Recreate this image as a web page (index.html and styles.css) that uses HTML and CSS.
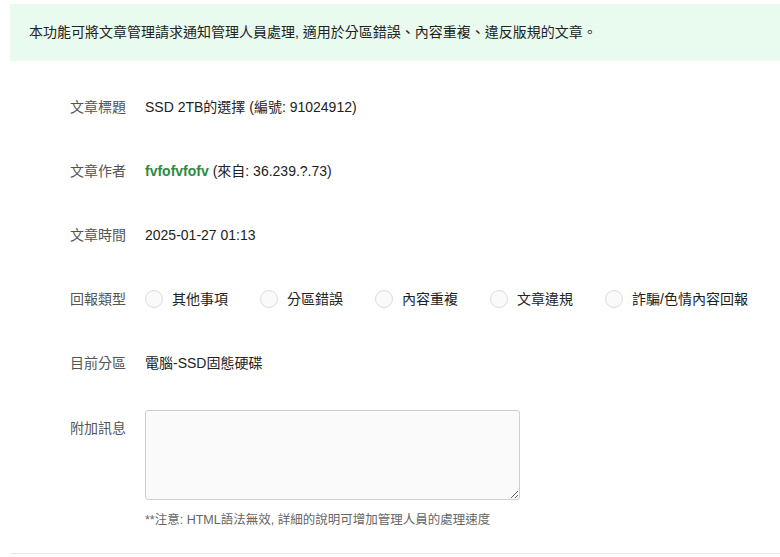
FILE: index.html
```html
<!DOCTYPE html>
<html lang="zh-Hant">
<head>
<meta charset="utf-8">
<link rel="stylesheet" href="styles.css">
</head>
<body>
<div class="wrap">
  <div class="notice">本功能可將文章管理請求通知管理人員處理, 適用於分區錯誤、內容重複、違反版規的文章。</div>
  <div class="form">
    <div class="row">
      <div class="label">文章標題</div>
      <div class="value">SSD 2TB的選擇 (編號: 91024912)</div>
    </div>
    <div class="row">
      <div class="label">文章作者</div>
      <div class="value"><span class="author">fvfofvfofv</span> (來自: 36.239.?.73)</div>
    </div>
    <div class="row">
      <div class="label">文章時間</div>
      <div class="value">2025-01-27 01:13</div>
    </div>
    <div class="row">
      <div class="label">回報類型</div>
      <div class="value radios">
        <label class="radio"><span class="dot"></span>其他事項</label>
        <label class="radio"><span class="dot"></span>分區錯誤</label>
        <label class="radio"><span class="dot"></span>內容重複</label>
        <label class="radio"><span class="dot"></span>文章違規</label>
        <label class="radio"><span class="dot"></span>詐騙/色情內容回報</label>
      </div>
    </div>
    <div class="row">
      <div class="label">目前分區</div>
      <div class="value">電腦-SSD固態硬碟</div>
    </div>
    <div class="row row-top">
      <div class="label">附加訊息</div>
      <div class="value">
        <textarea class="msg"></textarea>
        <div class="hint">**注意: HTML語法無效, 詳細的說明可增加管理人員的處理速度</div>
      </div>
    </div>
  </div>
</div>
</body>
</html>
```
FILE: styles.css
```css
html, body {
  margin: 0;
  padding: 0;
  background: #fff;
}
body {
  font-family: "Liberation Sans", "Noto Sans CJK TC", sans-serif;
  font-size: 14px;
  color: #222;
}
.wrap {
  margin: 4px 0 0 10px;
  height: 550px;
  border-bottom: 1px solid #e6e6e6;
  box-sizing: border-box;
  overflow: hidden;
}
.notice {
  background: #e9fbef;
  height: 57px;
  line-height: 57px;
  padding-left: 19px;
  color: #222;
  white-space: nowrap;
}
.form {
  margin-top: 14px;
  padding-left: 60px;
}
.row {
  display: flex;
  align-items: center;
  height: 64px;
}
.label {
  width: 56px;
  margin-right: 19px;
  color: #555;
  line-height: 20px;
  flex: none;
}
.value {
  line-height: 20px;
  white-space: nowrap;
}
.author {
  color: #2f8a3f;
  font-weight: bold;
}
.radios {
  display: flex;
  gap: 32px;
}
.radio {
  display: flex;
  align-items: center;
  color: #222;
}
.dot {
  width: 16px;
  height: 16px;
  border: 1px solid #dcdcdc;
  border-radius: 50%;
  background: #fafafa;
  margin-right: 9px;
  flex: none;
}
.row-top {
  align-items: flex-start;
  height: auto;
  margin-top: 15px;
}
.row-top .label {
  padding-top: 8px;
}
.msg {
  display: block;
  width: 375px;
  height: 90px;
  box-sizing: border-box;
  border: 1px solid #cfcfcf;
  border-radius: 3px;
  background: #fafafa;
  margin: 0;
  resize: vertical;
}
.hint {
  margin-top: 12px;
  font-size: 12.5px;
  line-height: 16px;
  color: #666;
}
```
